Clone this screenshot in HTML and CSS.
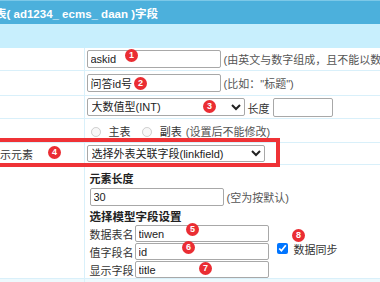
FILE: index.html
```html
<!DOCTYPE html>
<html lang="en">
<head>
  <meta charset="UTF-8">
  <title>字段</title>
  <link rel="stylesheet" href="styles.css">
</head>
<body>
<div class="page">
  <table class="form">
    <colgroup>
      <col class="col-label">
      <col>
    </colgroup>
    <tr class="title-row">
      <td colspan="2"><span class="title">表( ad1234_ ecms_ daan )字段</span></td>
    </tr>
    <tr class="sub-row">
      <td colspan="2"></td>
    </tr>
    <tr class="r-name">
      <td class="label"></td>
      <td class="field"><input type="text" class="txt" value="askid"> <span class="hint">(由英文与数字组成，且不能以数字开头)</span></td>
    </tr>
    <tr class="r-title">
      <td class="label"></td>
      <td class="field"><input type="text" class="txt" value="问答id号"> <span class="hint">(比如："标题")</span></td>
    </tr>
    <tr class="r-type">
      <td class="label"></td>
      <td class="field">
        <select class="sel sel-type"><option>大数值型(INT)</option></select>
        <span class="txt-label">长度</span>
        <input type="text" class="txt txt-len" value="">
      </td>
    </tr>
    <tr class="r-table">
      <td class="label"></td>
      <td class="field radios">
        <label><input type="radio" name="tb" disabled> 主表</label>
        <label><input type="radio" name="tb" disabled> 副表</label>
        <span class="hint">(设置后不能修改)</span>
      </td>
    </tr>
    <tr class="r-form">
      <td class="label"><span class="cut">显示元素</span></td>
      <td class="field">
        <select class="sel sel-form"><option>选择外表关联字段(linkfield)</option></select>
      </td>
    </tr>
    <tr class="r-big">
      <td class="label"></td>
      <td class="field big">
        <div class="sub-title">元素长度</div>
        <div class="line"><input type="text" class="txt" value="30"> <span class="hint">(空为按默认)</span></div>
        <div class="sub-title wide">选择模型字段设置</div>
        <div class="link-set">
          <div class="link-fields">
            <div class="link-line"><span class="txt-label">数据表名</span><input type="text" class="txt" value="tiwen"></div>
            <div class="link-line"><span class="txt-label">值字段名</span><input type="text" class="txt" value="id"></div>
            <div class="link-line"><span class="txt-label">显示字段</span><input type="text" class="txt" value="title"></div>
          </div>
          <label class="sync"><input type="checkbox" checked> 数据同步</label>
        </div>
      </td>
    </tr>
    <tr class="foot-row">
      <td class="label"></td>
      <td class="field"></td>
    </tr>
  </table>

  <div class="mark-box"></div>
  <span class="badge" style="left:125px;top:49px">1</span>
  <span class="badge" style="left:134px;top:77px">2</span>
  <span class="badge" style="left:203px;top:100px">3</span>
  <span class="badge" style="left:48px;top:146px">4</span>
  <span class="badge" style="left:186px;top:223px">5</span>
  <span class="badge" style="left:182px;top:241px">6</span>
  <span class="badge" style="left:199px;top:262px">7</span>
  <span class="badge" style="left:292px;top:229px">8</span>
</div>
</body>
</html>
```

FILE: styles.css
```css
body {
  margin: 0;
  padding: 0;
  background: #fff;
  font-family: "Liberation Sans", "Noto Sans CJK SC", sans-serif;
  font-size: 11px;
  color: #333;
  overflow: hidden;
}
.page {
  position: relative;
  width: 380px;
  height: 282px;
  overflow: hidden;
}
.form {
  width: 100%;
  border-collapse: collapse;
  table-layout: fixed;
}
.col-label {
  width: 84px;
}
.form td {
  padding: 0;
  border-bottom: 1px solid #d9f0fa;
  vertical-align: middle;
}
.form td.label {
  border-right: 1px solid #d9f0fa;
  white-space: nowrap;
  overflow: hidden;
}
.form td.field {
  padding-left: 2px;
  white-space: nowrap;
  overflow: hidden;
}
.title-row td {
  height: 23px;
  background: #4cb0dc;
  border-bottom: none;
  border-top: 1px solid #7cc8e8;
}
.title {
  display: block;
  margin-left: -5px;
  color: #fff;
  font-weight: bold;
  font-size: 11.5px;
}
.sub-row td {
  height: 23px;
  background: #c8effd;
  border-bottom: 1px solid #c8effd;
}
.r-name td { height: 22px; }
.r-title td { height: 24px; }
.r-type td { height: 22px; }
.r-table td { height: 23px; }
.r-form td { height: 21px; }
.r-big td { height: 113px; }
.foot-row td {
  height: 10px;
  background: #eef9fd;
  border-bottom: none;
}
.cut {
  display: block;
  margin-left: -11px;
  font-size: 11px;
  color: #333;
}
.txt {
  box-sizing: border-box;
  width: 134px;
  height: 18px;
  padding: 0 3px;
  border: 1px solid #a8a8a8;
  border-radius: 2px;
  font-family: "Liberation Sans", "Noto Sans CJK SC", sans-serif;
  font-size: 11px;
  color: #222;
  vertical-align: middle;
}
.txt-len {
  width: 60px;
  height: 19px;
}
.hint {
  color: #555;
  font-size: 11px;
  vertical-align: middle;
}
.txt-label {
  font-size: 11px;
  color: #333;
  vertical-align: middle;
}
.sel {
  box-sizing: border-box;
  height: 18px;
  border: 1px solid #a8a8a8;
  border-radius: 2px;
  background: #fff;
  font-family: "Liberation Sans", "Noto Sans CJK SC", sans-serif;
  font-size: 11px;
  color: #222;
  vertical-align: middle;
}
.sel-type { width: 158px; }
.sel-form { width: 178px; height: 17px; }
.radios label {
  margin-left: 3px;
  margin-right: 4px;
  font-size: 11px;
  vertical-align: middle;
}
.radios input {
  width: 10px;
  height: 10px;
  margin: 0 5px 0 1px;
  vertical-align: -1px;
}
.radios .hint { margin-left: -3px; }
.big {
  vertical-align: top !important;
}
.big .sub-title {
  margin: 5px 0 0 3px;
  font-weight: bold;
  font-size: 11px;
  color: #222;
}
.big .sub-title.wide {
  margin-top: 2px;
  font-size: 11.5px;
}
.big .line {
  margin: 2px 0 0 3px;
}
.link-set {
  display: flex;
  align-items: center;
  gap: 8px;
  margin: 1px 0 0 3px;
}
.link-fields {
  display: flex;
  flex-direction: column;
  gap: 1px;
}
.link-line {
  display: flex;
  align-items: center;
  gap: 1px;
}
.link-line .txt {
  height: 17px;
}
.sync {
  display: flex;
  align-items: center;
  gap: 6px;
  margin-bottom: 6px;
  font-size: 11px;
}
.sync input {
  width: 11px;
  height: 11px;
  margin: 0;
}
.mark-box {
  position: absolute;
  left: -4px;
  top: 138px;
  width: 276px;
  height: 21px;
  border: 4px solid #ef3236;
}
.badge {
  position: absolute;
  width: 13px;
  height: 13px;
  border-radius: 50%;
  background: #ea2d33;
  color: #fff;
  font-size: 9px;
  font-weight: bold;
  line-height: 13px;
  text-align: center;
  font-family: "Liberation Sans", sans-serif;
}
```
